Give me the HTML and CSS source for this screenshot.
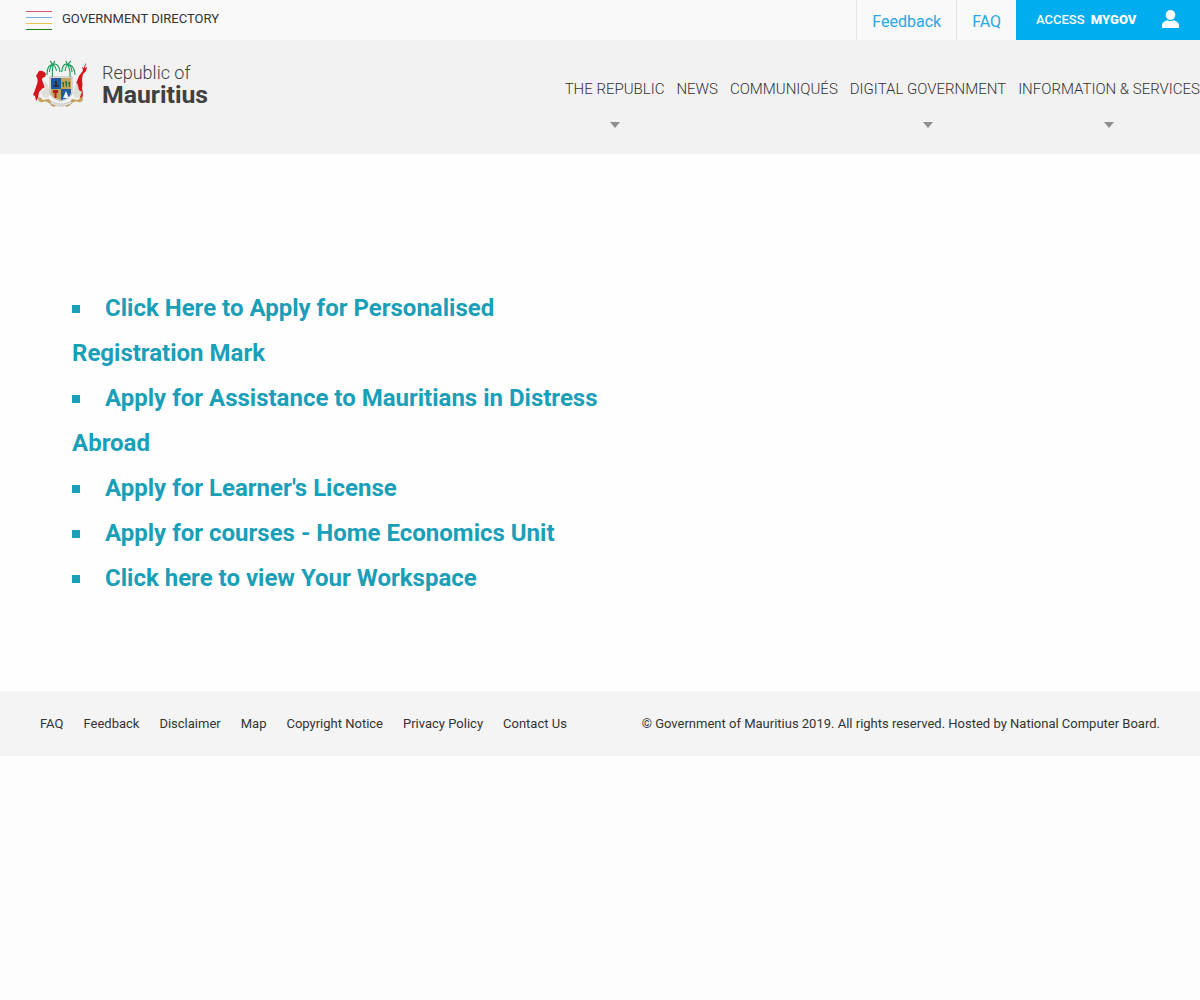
FILE: index.html
```html
<!DOCTYPE html>
<html lang="en">
<head>
<meta charset="utf-8">
<title>Republic of Mauritius</title>
<link rel="stylesheet" href="styles.css">
</head>
<body>
<div class="topbar">
  <a class="directory" href="#">
    <span class="burger"><i class="red"></i><i class="blue"></i><i class="yellow"></i><i class="green"></i></span>
    <span class="directory-label">GOVERNMENT DIRECTORY</span>
  </a>
  <nav class="toplinks">
    <a class="toplink" href="#">Feedback</a>
    <a class="toplink" href="#">FAQ</a>
    <a class="mygov" href="#">
      <span class="mygov-text">ACCESS <b>MYGOV</b></span>
      <svg class="user" width="17" height="18" viewBox="0 0 17 18"><ellipse cx="8.500" cy="5" rx="4.800" ry="5" fill="#fff"/><path d="M0 18v-3C0 12.600 2.800 11 5.500 10.200c1.800 1.200 4.200 1.200 6 0 2.700.8 5.500 2.400 5.500 4.800v3z" fill="#fff"/></svg>
    </a>
  </nav>
</div>
<header class="header">
  <a class="brand" href="#">
    <svg class="crest" width="60" height="48" viewBox="0 0 60 48">
      <path d="M7 11c3-1 6 1 7 3l-1 3c-2 0-3 1-3 3l3 8-2 0-4 4-1 6-2 3-1-5-2-1 2-5 2-6c1-3 1-5-1-8z" fill="#d5141c"/>
      <path d="M54 3l-1 5 2-1-1 4-3 3-1 5c0 3 1 6 0 9l1 6-1 5-2-1-1-6-2-4-1-5 1-2 2-5 3-4 1-2-1-3 2 1 1-4z" fill="#d5141c"/>
      <path d="M13 21c3 3 4 8 5 13l-2 4-5-1-2-5 3-2z" fill="#dedfd9"/>
      <path d="M45 22c-2 3-3 8-4 12l2 4 5-1 2-5-3-2z" fill="#dedfd9"/>
      <g class="palm">
        <path d="M20.500 18C20 13 20.500 9 21 5M38 18c.5-5 0-9-2.300-13"/>
        <path d="M21 5c-3-1-6 2-6 10M21 5c-2 0-3 2-3.500 7M21 5c2-2 6-1 7 7M21 5c1 0 3 2 3.500 6M21 5c-1-2-2-3-3-4M21 5c1-2 1-3 2-4"/>
        <path d="M35.700 5c3-1 7 2 7.300 10M35.700 5c2 0 4 2 4.300 7M35.700 5c-2-2-5-1-6 7M35.700 5c-1 0-2 2-2.700 6M35.700 5c1-2 2-3 3-4M35.700 5c-1-2-1-3-2-4"/>
      </g>
      <path d="M18 17h22v15c0 5-5 7-11 9-6-2-11-4-11-9z" fill="#f4f4f0" stroke="#8d8d86" stroke-width=".6"/>
      <rect x="19" y="18" width="10" height="11" fill="#1d5aa0"/>
      <rect x="29" y="18" width="10" height="11" fill="#c3a25b"/>
      <path d="M19 29h10v11c-5-1-10-3-10-8z" fill="#c3a25b"/>
      <path d="M29 29h10v3c0 5-5 7-10 8z" fill="#1d5aa0"/>
      <path d="M21 25h6l-1 2h-4zM23 21h2v4h-2z" fill="#2b3036"/>
      <path d="M30 22h2v5h-1zM33 21h2v6h-1zM36 22h2v5h-1z" fill="#277a3e"/>
      <path d="M21 30h5v3h-1.500v5h-2v-5H21z" fill="#b21c24"/>
      <path d="M34 31l3 7h-6z" fill="#eef2f4"/>
      <path d="M6 38c0 3 2 5 5 4 3-1 5 0 7 2 2 3 5 4 6 1l-4-2-3-4-6 1-3-3z" fill="#c3a25b"/>
      <path d="M51 38c0 3-2 5-5 4-3-1-5 0-7 2-2 3-5 4-6 1l4-2 3-4 6 1 3-3z" fill="#c3a25b"/>
      <path d="M18 41c4 2 7 3 11 3s7-1 11-3l-1 3c-3 1-6 2-10 2s-7-1-10-2z" fill="#e4e4de" stroke="#9a9a92" stroke-width=".4"/>
    </svg>
    <span class="brand-text"><span class="republic">Republic of</span><strong class="mauritius">Mauritius</strong></span>
  </a>
  <nav class="mainnav">
    <a class="navitem has-sub" href="#">THE REPUBLIC</a>
    <a class="navitem" href="#">NEWS</a>
    <a class="navitem" href="#">COMMUNIQUÉS</a>
    <a class="navitem has-sub" href="#">DIGITAL GOVERNMENT</a>
    <a class="navitem has-sub" href="#">INFORMATION &amp; SERVICES</a>
  </nav>
</header>
<main class="content">
  <ul class="services">
    <li><a href="#">Click Here to Apply for Personalised Registration Mark</a></li>
    <li><a href="#">Apply for Assistance to Mauritians in Distress Abroad</a></li>
    <li><a href="#">Apply for Learner's License</a></li>
    <li><a href="#">Apply for courses - Home Economics Unit</a></li>
    <li><a href="#">Click here to view Your Workspace</a></li>
  </ul>
</main>
<footer class="footer">
  <nav class="footlinks">
    <a href="#">FAQ</a>
    <a href="#">Feedback</a>
    <a href="#">Disclaimer</a>
    <a href="#">Map</a>
    <a href="#">Copyright Notice</a>
    <a href="#">Privacy Policy</a>
    <a href="#">Contact Us</a>
  </nav>
  <p class="copyright">© Government of Mauritius 2019. All rights reserved. Hosted by National Computer Board.</p>
</footer>
</body>
</html>
```
FILE: styles.css
```css
* { box-sizing: border-box; }
html, body { margin: 0; padding: 0; }
body { background: #fdfdfd; font-family: Roboto, sans-serif; color: #333; }
a { text-decoration: none; color: inherit; }

.topbar { height: 40px; background: #f9f9f9; display: flex; justify-content: space-between; }
.directory { display: flex; align-items: flex-start; gap: 10px; padding: 11px 0 0 26px; font-size: 13px; color: #333; }
.directory-label { line-height: 15px; }
.burger { width: 26px; height: 19px; display: flex; flex-direction: column; justify-content: space-between; }
.burger i { display: block; height: 1px; }
.burger .red { background: #d9566b; }
.burger .blue { background: #6fb1e4; }
.burger .yellow { background: #e9c557; }
.burger .green { background: #1d7f1d; }

.toplinks { display: flex; }
.toplink { display: flex; align-items: center; padding: 3px 15px 0; font-size: 16px; color: #27a8e8; border-left: 1px solid #e4e4e4; }
.mygov { width: 184px; background: #00aeef; color: #fff; display: flex; align-items: center; justify-content: space-between; padding: 0 21px 2px 20px; font-size: 13px; font-weight: 500; }
.mygov b { font-weight: 900; margin-left: 3px; }

.header { height: 114px; background: #f2f2f2; display: flex; justify-content: space-between; align-items: flex-start; }
.brand { display: flex; margin: 20px 0 0 32px; gap: 10px; }
.crest { display: block; }
.palm { fill: none; stroke: #1d9a56; stroke-width: 1.1; }
.brand-text { display: flex; flex-direction: column; color: #404041; margin-top: 2px; }
.republic { font-size: 18px; font-weight: 300; line-height: 21px; }
.mauritius { font-size: 24.800px; font-weight: 700; line-height: 24px; }

.mainnav { display: flex; gap: 12px; padding-top: 39px; }
.navitem { display: block; font-size: 15px; font-weight: 300; line-height: 20px; color: #333; position: relative; height: 75px; white-space: nowrap; }
.has-sub::after { content: ""; position: absolute; left: 50%; top: 43px; margin-left: -5px; border-style: solid; border-width: 6px 5.500px 0; border-color: #8f8f8f transparent transparent; }

.content { height: 537px; padding: 132px 72px 0; background: #fefefe; }
.services { list-style: none; margin: 0; padding: 0; width: 540px; font-size: 24px; font-weight: 700; line-height: 45px; color: #1a9fb9; }
.services li::before { content: ""; display: inline-block; width: 8px; height: 8px; background: #1a9fb9; margin-right: 25px; vertical-align: 3px; }

.footer { height: 65px; background: #f4f4f4; display: flex; justify-content: space-between; align-items: center; padding: 0 40px; font-size: 13px; color: #333; }
.footlinks { display: flex; gap: 20px; }
.copyright { margin: 0; }
```
